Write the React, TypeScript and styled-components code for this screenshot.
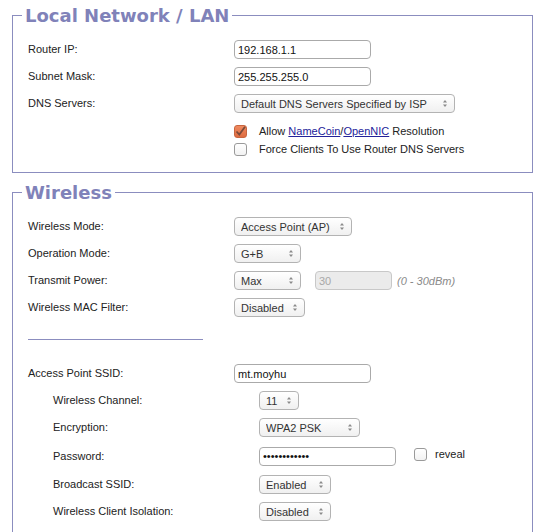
import React from "react";
import styled, { createGlobalStyle } from "styled-components";

const GlobalStyle = createGlobalStyle`
  html, body {
    margin: 0;
    padding: 0;
    background: #fff;
  }
  body {
    font-family: "Liberation Sans", Arial, sans-serif;
    font-size: 11px;
    color: #222;
  }
`;

const Page = styled.div`
  padding: 4px 9px 0 12px;
  width: 542px;
  box-sizing: border-box;
`;

const Section = styled.fieldset`
  margin: 0 0 8px 0;
  padding: 9px 15px 14px 15px;
  border: 1px solid #8b8dbf;
  min-width: 0;
`;

const Legend = styled.legend`
  margin-left: -6px;
  padding: 0 3px;
  font-family: "DejaVu Sans", Verdana, sans-serif;
  font-size: 18px;
  font-weight: bold;
  line-height: 23px;
  color: #8082b9;
`;

const Row = styled.div<{ $h?: number }>`
  display: grid;
  grid-template-columns: 206px 1fr;
  align-items: center;
  height: ${(p) => p.$h ?? 27}px;
`;

const Label = styled.div`
  padding-bottom: 1px;
`;

const Value = styled.div`
  display: flex;
  align-items: center;
`;

const Indented = styled.div`
  padding-left: 25px;
`;

const TextInput = styled.input<{ $w?: number }>`
  box-sizing: border-box;
  width: ${(p) => p.$w ?? 137}px;
  height: 19px;
  padding: 0 3px;
  border: 1px solid #aaa;
  border-radius: 4px;
  font-family: "Liberation Sans", Arial, sans-serif;
  font-size: 11px;
  color: #111;
  background: #fff;
  outline: none;

  &:disabled {
    background: #ebebeb;
    border-color: #c8c8c8;
    color: #a8a8a8;
  }
`;

const SelectWrap = styled.div<{ $w: number }>`
  position: relative;
  width: ${(p) => p.$w}px;
  height: 19px;
`;

const SelectBox = styled.select`
  box-sizing: border-box;
  appearance: none;
  -webkit-appearance: none;
  width: 100%;
  height: 19px;
  padding: 0 16px 0 6px;
  border: 1px solid #b3b3b3;
  border-radius: 4px;
  background: linear-gradient(#ffffff, #f0f0f0);
  font-family: "Liberation Sans", Arial, sans-serif;
  font-size: 11px;
  color: #333;
  outline: none;
`;

const Arrows = styled.svg`
  position: absolute;
  right: 7px;
  top: 5px;
  pointer-events: none;
`;

const Select = ({ w, value }: { w: number; value: string }) => (
  <SelectWrap $w={w}>
    <SelectBox defaultValue={value}>
      <option>{value}</option>
    </SelectBox>
    <Arrows width="6" height="9" viewBox="0 0 6 9">
      <path d="M3 1 L5 3.5 H1 Z" fill="#8a8a8a" />
      <path d="M3 8 L5 5.5 H1 Z" fill="#8a8a8a" />
    </Arrows>
  </SelectWrap>
);

const Box = styled.span<{ $checked?: boolean }>`
  box-sizing: border-box;
  display: inline-flex;
  align-items: center;
  justify-content: center;
  width: 13px;
  height: 13px;
  border: 1px solid ${(p) => (p.$checked ? "#c8653f" : "#9a9a9a")};
  border-radius: 3px;
  background: ${(p) =>
    p.$checked ? "linear-gradient(#ef8a60, #df6c40)" : "linear-gradient(#fff, #f2f2f2)"};
`;

const Check = ({ checked }: { checked?: boolean }) => (
  <Box $checked={checked}>
    {checked && (
      <svg width="11" height="11" viewBox="0 0 11 11">
        <path
          d="M1.5 5.5 L4.3 8.5 L10 0.8"
          fill="none"
          stroke="#7a4a3a"
          strokeWidth="1.8"
        />
      </svg>
    )}
  </Box>
);

const CheckRow = styled.div`
  display: flex;
  align-items: center;
  height: 18px;
  gap: 12px;
  margin-left: 206px;
`;

const CheckGroup = styled.div`
  margin-top: 5px;
`;

const Link = styled.a`
  color: #22229a;
  text-decoration: underline;
`;

const Hint = styled.span`
  margin-left: 5px;
  font-style: italic;
  color: #8a8a8a;
`;

const Divider = styled.hr`
  width: 175px;
  margin: 18px 0 20px 0;
  border: none;
  border-top: 1px solid #8b8dbf;
`;

const Reveal = styled.label`
  display: flex;
  align-items: center;
  gap: 8px;
  margin-left: 18px;
  margin-top: -4px;
`;

export default function App() {
  return (
    <Page>
      <GlobalStyle />
      <Section>
        <Legend>Local Network / LAN</Legend>
        <Row>
          <Label>Router IP:</Label>
          <Value>
            <TextInput defaultValue="192.168.1.1" />
          </Value>
        </Row>
        <Row>
          <Label>Subnet Mask:</Label>
          <Value>
            <TextInput defaultValue="255.255.255.0" />
          </Value>
        </Row>
        <Row>
          <Label>DNS Servers:</Label>
          <Value>
            <Select w={221} value="Default DNS Servers Specified by ISP" />
          </Value>
        </Row>
        <CheckGroup>
          <CheckRow>
            <Check checked />
            <span>
              Allow <Link>NameCoin</Link>/<Link>OpenNIC</Link> Resolution
            </span>
          </CheckRow>
          <CheckRow>
            <Check />
            <span>Force Clients To Use Router DNS Servers</span>
          </CheckRow>
        </CheckGroup>
      </Section>

      <Section>
        <Legend>Wireless</Legend>
        <Row>
          <Label>Wireless Mode:</Label>
          <Value>
            <Select w={118} value="Access Point (AP)" />
          </Value>
        </Row>
        <Row>
          <Label>Operation Mode:</Label>
          <Value>
            <Select w={67} value="G+B" />
          </Value>
        </Row>
        <Row>
          <Label>Transmit Power:</Label>
          <Value>
            <Select w={67} value="Max" />
            <TextInput $w={77} disabled defaultValue="30" style={{ marginLeft: 14 }} />
            <Hint>(0 - 30dBm)</Hint>
          </Value>
        </Row>
        <Row>
          <Label>Wireless MAC Filter:</Label>
          <Value>
            <Select w={71} value="Disabled" />
          </Value>
        </Row>

        <Divider />

        <Row>
          <Label>Access Point SSID:</Label>
          <Value>
            <TextInput defaultValue="mt.moyhu" />
          </Value>
        </Row>
        <Indented>
          <Row>
            <Label>Wireless Channel:</Label>
            <Value>
              <Select w={40} value="11" />
            </Value>
          </Row>
          <Row>
            <Label>Encryption:</Label>
            <Value>
              <Select w={101} value="WPA2 PSK" />
            </Value>
          </Row>
          <Row $h={30}>
            <Label>Password:</Label>
            <Value>
              <TextInput type="password" defaultValue="moyhu1234567" />
              <Reveal>
                <Check />
                <span>reveal</span>
              </Reveal>
            </Value>
          </Row>
          <Row>
            <Label>Broadcast SSID:</Label>
            <Value>
              <Select w={72} value="Enabled" />
            </Value>
          </Row>
          <Row>
            <Label>Wireless Client Isolation:</Label>
            <Value>
              <Select w={72} value="Disabled" />
            </Value>
          </Row>
        </Indented>
      </Section>
    </Page>
  );
}
